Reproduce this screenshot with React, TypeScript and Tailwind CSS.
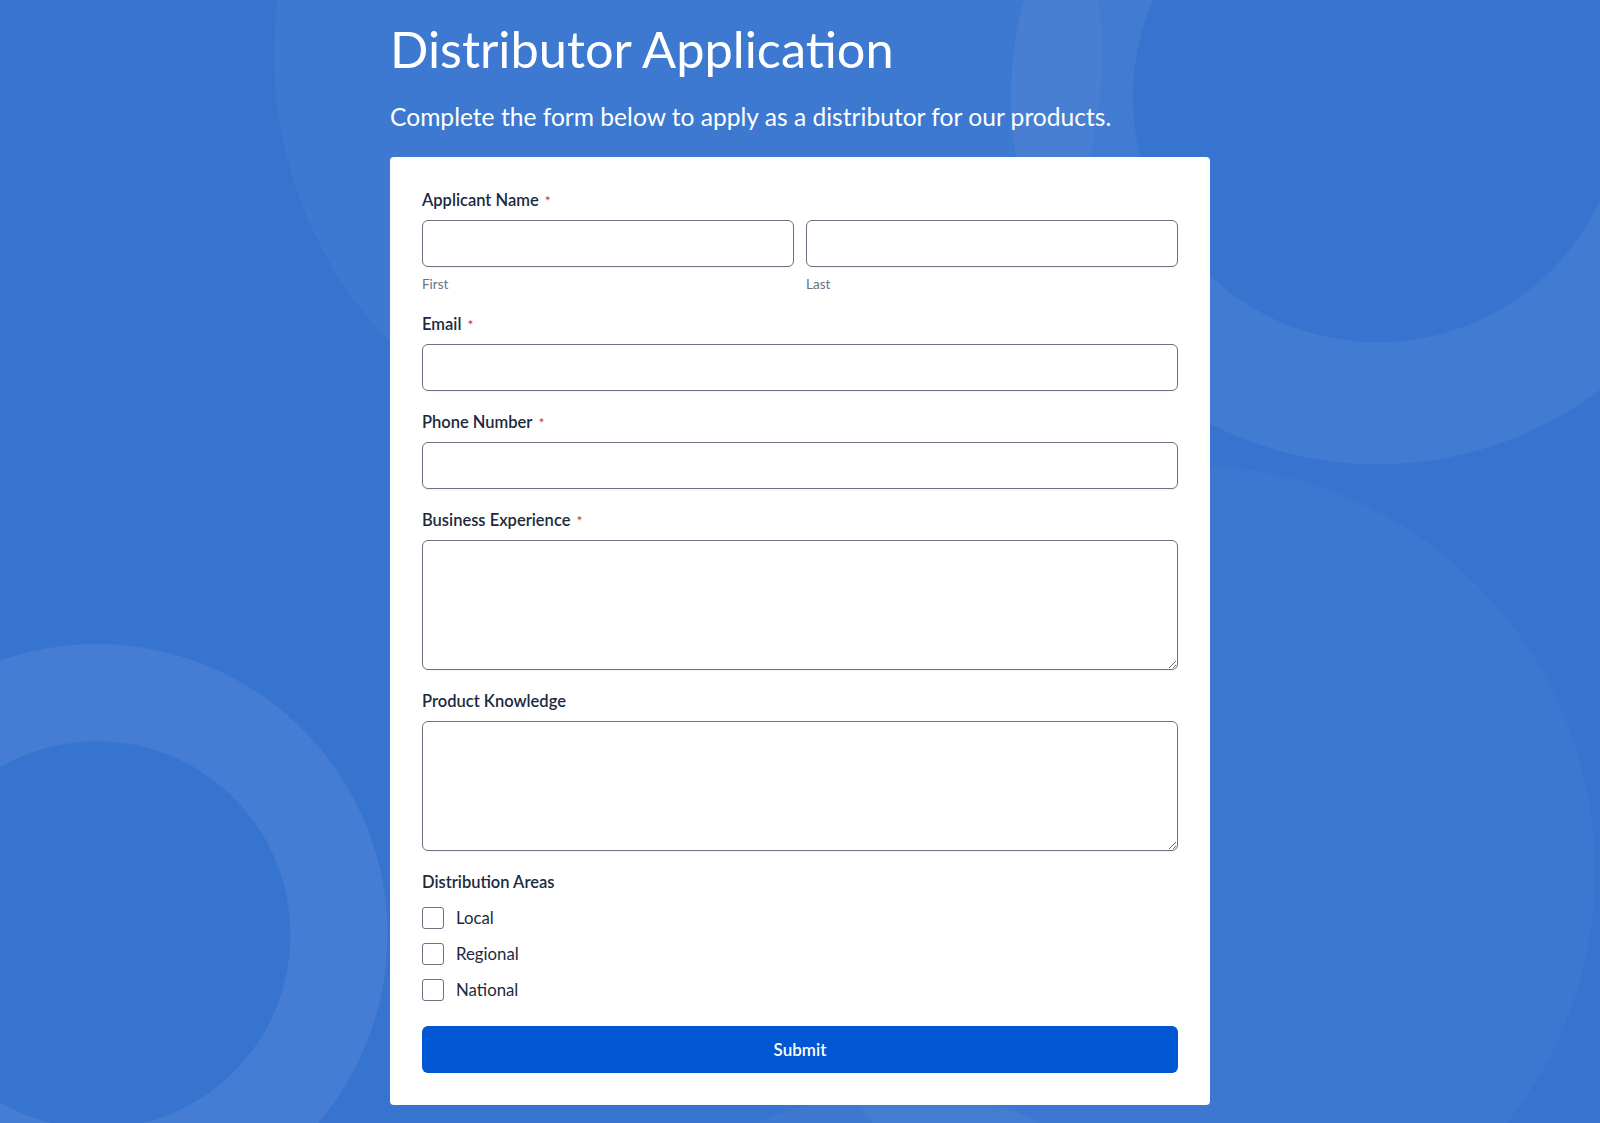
import React from "react";

function Label({ text, required }: { text: string; required?: boolean }) {
  return (
    <div className="mb-[9px] flex items-center text-[16.5px] leading-[22px] font-semibold text-[#1c2a40]">
      <span>{text}</span>
      {required && (
        <span className="ml-[6px] mt-[2px] text-[14px] leading-none font-normal text-[#d93025]">*</span>
      )}
    </div>
  );
}

const inputCls =
  "block w-full h-[47px] rounded-md border border-[#6c7280] bg-white shadow-[0_1px_2px_rgba(0,0,0,0.06)] outline-none";
const areaCls =
  "block w-full rounded-md border border-[#6c7280] bg-white shadow-[0_1px_2px_rgba(0,0,0,0.06)] outline-none";

export default function App() {
  return (
    <div
      className="relative min-h-screen w-full overflow-hidden bg-[#3674d0]"
      style={{ fontFamily: "Lato, 'Noto Sans', sans-serif" }}
    >
      <svg
        className="pointer-events-none absolute inset-0 h-full w-full"
        viewBox="0 0 1600 1123"
        preserveAspectRatio="none"
      >
        <circle cx="688" cy="55" r="414" fill="#ffffff" fillOpacity="0.035" />
        <circle cx="1378" cy="97" r="306" fill="none" stroke="#ffffff" strokeOpacity="0.06" strokeWidth="122" />
        <circle cx="97" cy="934" r="242" fill="none" stroke="#ffffff" strokeOpacity="0.07" strokeWidth="97" />
        <circle cx="1190" cy="870" r="405" fill="#ffffff" fillOpacity="0.03" />
        <circle cx="900" cy="1420" r="330" fill="#ffffff" fillOpacity="0.04" />
      </svg>

      <div className="relative mx-auto w-[820px] pt-[20px] pb-[19px]">
        <h1 className="text-[50.5px] leading-[58px] font-normal text-white">Distributor Application</h1>
        <p className="mt-[23px] text-[24.6px] leading-[32px] text-white">
          Complete the form below to apply as a distributor for our products.
        </p>

        <div className="mt-[24px] rounded-[4px] bg-white px-8 pt-8 pb-[32px]">
          <div className="flex flex-col gap-5">
            <div>
              <Label text="Applicant Name" required />
              <div className="grid grid-cols-2 gap-3">
                <div>
                  <input className={inputCls} />
                  <div className="mt-2 text-[13.5px] leading-[18px] text-[#6b7280]">First</div>
                </div>
                <div>
                  <input className={inputCls} />
                  <div className="mt-2 text-[13.5px] leading-[18px] text-[#6b7280]">Last</div>
                </div>
              </div>
            </div>

            <div>
              <Label text="Email" required />
              <input className={inputCls} />
            </div>

            <div>
              <Label text="Phone Number" required />
              <input className={inputCls} />
            </div>

            <div>
              <Label text="Business Experience" required />
              <textarea className={areaCls + " h-[130px]"} />
            </div>

            <div>
              <Label text="Product Knowledge" />
              <textarea className={areaCls + " h-[130px]"} />
            </div>

            <div>
              <div className="mb-[14px] text-[16.5px] leading-[22px] font-semibold text-[#1c2a40]">
                Distribution Areas
              </div>
              <div className="flex flex-col gap-[14px]">
                {["Local", "Regional", "National"].map((o) => (
                  <label key={o} className="flex h-[22px] items-center">
                    <span className="block h-[22px] w-[22px] rounded-[3px] border border-[#6c7280] bg-white" />
                    <span className="ml-3 text-[16.8px] leading-[22px] text-[#1c2a40]">{o}</span>
                  </label>
                ))}
              </div>
            </div>
          </div>

          <button className="mt-[25px] flex h-[47px] w-full items-center justify-center rounded-md bg-[#0156d3] text-[17px] font-semibold text-white">
            Submit
          </button>
        </div>
      </div>
    </div>
  );
}
